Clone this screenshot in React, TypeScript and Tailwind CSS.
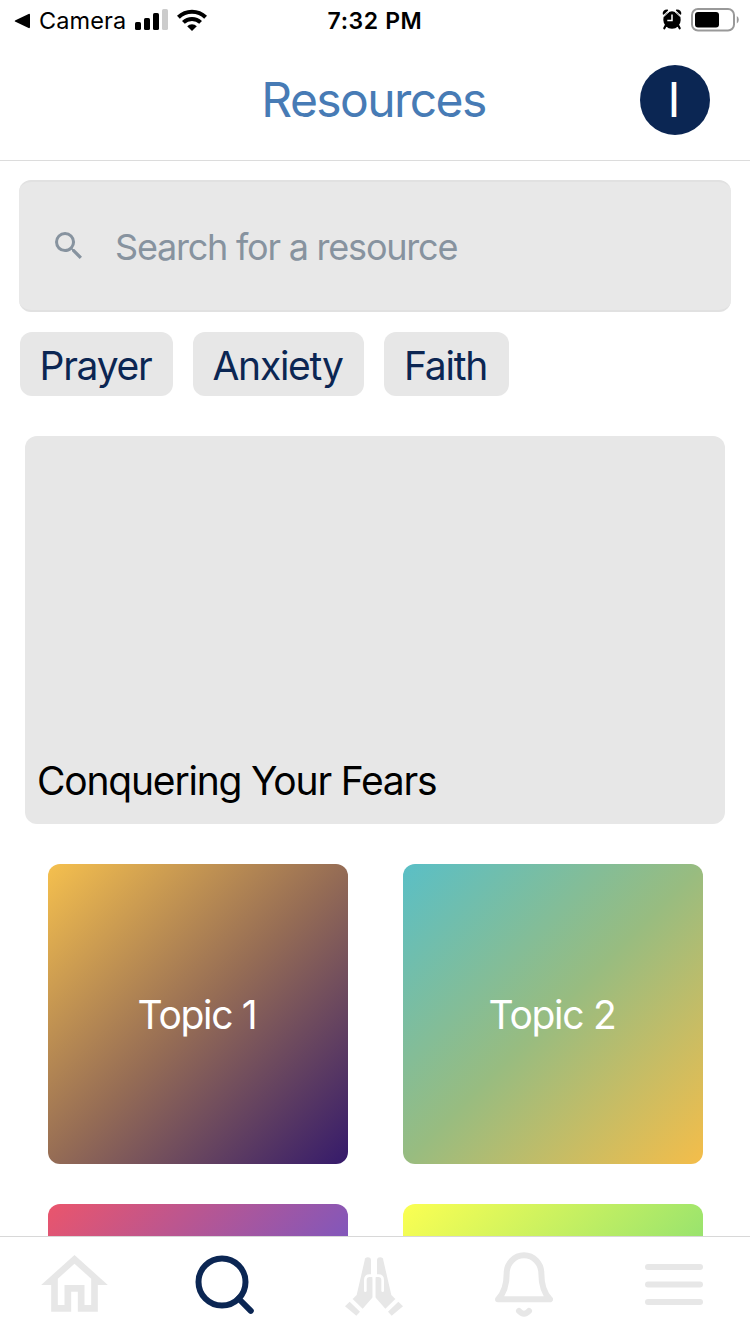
import type { ReactNode } from "react";

function StatusBar() {
  return (
    <div className="grid h-10 shrink-0 grid-cols-3 items-center text-black">
      <div className="flex h-10 items-center pl-[14px]">
        <svg className="h-[16px] w-[17px]" viewBox="0 0 17 16">
          <path d="M1.5 7.2 14.6.9q1.4-.6 1.4 1v12.2q0 1.6-1.4 1L1.5 8.8q-1.6-.8 0-1.6Z" />
        </svg>
        <span className="ml-[8px] w-[96px] whitespace-nowrap pt-px text-[23.5px] leading-10 tracking-[0.1px]">Camera</span>
        <svg className="h-[22px] w-[33px] -translate-y-px" viewBox="0 0 33 22">
          <rect x="0" y="13" width="6" height="8" rx="1.6" />
          <rect x="9" y="9" width="6" height="12" rx="1.6" />
          <rect x="18" y="4" width="6" height="17" rx="1.6" />
          <rect x="27" y="0" width="6" height="21" rx="1.6" fill="#ccc" />
        </svg>
        <svg className="ml-[9px] h-[22px] w-[30px] -translate-y-px" viewBox="0 0 30 22" fill="none" stroke="#000" strokeWidth="4">
          <path d="M1.4 8.2a19.4 19.4 0 0 1 27.2 0" />
          <path d="M6.4 13.4a12.4 12.4 0 0 1 17.2 0" />
          <path d="M15 22 10.2 17.2a6.8 6.8 0 0 1 9.6 0Z" fill="#000" stroke="none" />
        </svg>
      </div>
      <div className="pt-px text-center text-[23px] font-semibold leading-10 tracking-[0.6px]">7:32 PM</div>
      <div className="flex h-10 -translate-y-px items-center justify-end pr-[11px]">
        <svg className="h-[21px] w-[20px]" viewBox="0 0 20 21">
          <circle cx="10" cy="11" r="8.7" />
          <path d="m4 16-1.7 3.3M16 16l1.7 3.3" stroke="#000" strokeWidth="2.2" strokeLinecap="round" />
          <path d="M1.4 4.9Q1 1.2 5.4 1.3ZM18.6 4.9q.4-3.7-4-3.6Z" stroke="#000" strokeWidth="1.4" strokeLinejoin="round" />
          <path d="M2.2 7.2 7.4 2.4M17.8 7.2l-5.2-4.8" stroke="#fff" strokeWidth="1" />
          <path d="M10 5.5v6H5.3" fill="none" stroke="#fff" strokeWidth="1.5" />
        </svg>
        <svg className="ml-[9px] h-[24px] w-[48px]" viewBox="0 0 48 24">
          <rect x="1" y="1" width="42" height="21.5" rx="6" fill="none" stroke="#999" strokeWidth="2" />
          <rect x="4" y="4" width="24" height="15.5" rx="3" />
          <path d="M45.8 8v7.5q2-1.2 2-3.7t-2-3.8Z" fill="#999" />
        </svg>
      </div>
    </div>
  );
}

function Tag({ width, children }: { width: string; children: ReactNode }) {
  return (
    <button
      className={`flex h-16 items-center justify-center rounded-xl bg-[#e7e7e7] pr-[2px] pt-[4px] text-[39px] tracking-[-1.25px] text-[#0b2653] ${width}`}
    >
      {children}
    </button>
  );
}

function Topic({ fill, children }: { fill: string; children?: ReactNode }) {
  return (
    <div
      className={`flex h-[300px] items-center justify-center rounded-xl text-[39px] tracking-[-1.3px] text-white ${fill}`}
    >
      <span className="-translate-x-px translate-y-px">{children}</span>
    </div>
  );
}

function Hand() {
  return (
    <>
      <path d="M59 13a9.5 9.5 0 0 1 19 0v44q5 3 5 12v55l-30 34-30-29 12-12Z" />
      <path d="M61 104V72q0-13 13-13h13" fill="none" stroke="#fff" strokeWidth="8" strokeLinecap="round" />
      <path d="m14 137 31 30-11 12L0 151Z" />
    </>
  );
}

function TabBar() {
  return (
    <nav className="grid h-[98px] shrink-0 grid-cols-5 border-t border-[#d8d8d8] bg-white pr-px">
      <div className="flex justify-center pr-px pt-[18px]">
        <svg className="h-[57px] w-[67px]" viewBox="0 0 200 171" fill="#e7e7e7">
          <path
            fillRule="evenodd"
            d="M100 0 200 90H170v80H110V110H90v60H30V90H0ZM100 26 50 71v79H70V90h60v60h20V71Z"
          />
        </svg>
      </div>
      <div className="flex justify-center pt-[18px]">
        <svg className="h-[60px] w-[60px]" viewBox="0 0 60 60" fill="none" stroke="#0b2653" strokeWidth="6">
          <circle cx="27" cy="27" r="23.5" />
          <path d="m43.5 43.5 12.3 12.3" strokeLinecap="round" />
        </svg>
      </div>
      <div className="flex justify-center pr-px pt-[19px]">
        <svg className="h-[60px] w-[58px]" viewBox="0 0 174 180" fill="#e7e7e7">
          <Hand />
          <g transform="translate(174 0) scale(-1 1)">
            <Hand />
          </g>
          <path d="M78 0h18v57H78ZM83 54h8v74h-8Z" fill="#fff" />
        </svg>
      </div>
      <div className="flex justify-center pr-px pt-[15px]">
        <svg
          className="h-[66px] w-[58px]"
          viewBox="0 0 174 198"
          fill="none"
          stroke="#e7e7e7"
          strokeWidth="18"
          strokeLinecap="round"
          strokeLinejoin="round"
        >
          <path d="M9 142Q35 116 35 64a52 54 0 0 1 104 0q0 52 26 78Z" />
          <path d="M72 177q15 16 30 0" />
        </svg>
      </div>
      <div className="flex justify-center pt-[27px]">
        <svg className="h-[42px] w-[58px]" viewBox="0 0 58 42" stroke="#e7e7e7" strokeWidth="6" strokeLinecap="round">
          <path d="M3 3h52M3 20.5h52M3 38h52" />
        </svg>
      </div>
    </nav>
  );
}

export default function App() {
  return (
    <div className="flex h-[1334px] w-[750px] flex-col overflow-hidden bg-white font-['Inter',sans-serif]">
      <StatusBar />
      <header className="grid h-[121px] shrink-0 grid-cols-[1fr_auto_1fr] items-center border-b border-[#dcdcdc]">
        <span />
        <h1 className="pr-[3px] text-[48px] leading-[120px] tracking-[-1.6px] text-[#477bb5]">Resources</h1>
        <div className="mr-10 flex size-[70px] items-center justify-center justify-self-end rounded-full bg-[#0b2653] text-[48px] text-white">
          <span className="-translate-x-px">I</span>
        </div>
      </header>
      <main className="min-h-0 flex-1 overflow-hidden pt-[19px]">
        <div className="mx-[19px] flex h-[132px] items-center rounded-xl border-y-2 border-[#e1e1e1] bg-[#e8e8e8] pl-[36px]">
          <svg className="h-[27px] w-[27px] -translate-y-px" viewBox="3 3 17.49 17.49" fill="#87939f">
            <path d="M15.5 14h-.79l-.28-.27A6.471 6.471 0 0 0 16 9.5 6.5 6.5 0 1 0 9.5 16c1.61 0 3.09-.59 4.23-1.57l.27.28v.79l5 4.99L20.49 19l-4.99-5zm-6 0C7.01 14 5 11.99 5 9.5S7.01 5 9.5 5 14 7.01 14 9.5 11.99 14 9.5 14z" />
          </svg>
          <span className="ml-[33px] pt-px text-[36px] tracking-[-1.22px] text-[#87939f]">Search for a resource</span>
        </div>
        <div className="mt-5 flex gap-5 px-5">
          <Tag width="w-[153px]">Prayer</Tag>
          <Tag width="w-[171px]">Anxiety</Tag>
          <Tag width="w-[125px]">Faith</Tag>
        </div>
        <section className="mx-[25px] mt-10 flex h-[388px] items-end rounded-xl bg-[#e7e7e7] pb-[14px] pl-3 text-[39px] tracking-[-1.2px] text-black">
          Conquering Your Fears
        </section>
        <section className="mt-10 grid grid-cols-[300px_300px] gap-x-[55px] gap-y-10 pl-12">
          <Topic fill="bg-[linear-gradient(135deg,#f5c04e,#956c55,#351a6b)]">Topic 1</Topic>
          <Topic fill="bg-[linear-gradient(135deg,#5abfc6,#98bc80,#f4bd4a)]">Topic 2</Topic>
          <Topic fill="bg-[linear-gradient(135deg,#ea556c,#8c57b3,#2f57fc)]" />
          <Topic fill="bg-[linear-gradient(135deg,#fbff52,#a3e66b,#4ac985)]" />
        </section>
      </main>
      <TabBar />
    </div>
  );
}
